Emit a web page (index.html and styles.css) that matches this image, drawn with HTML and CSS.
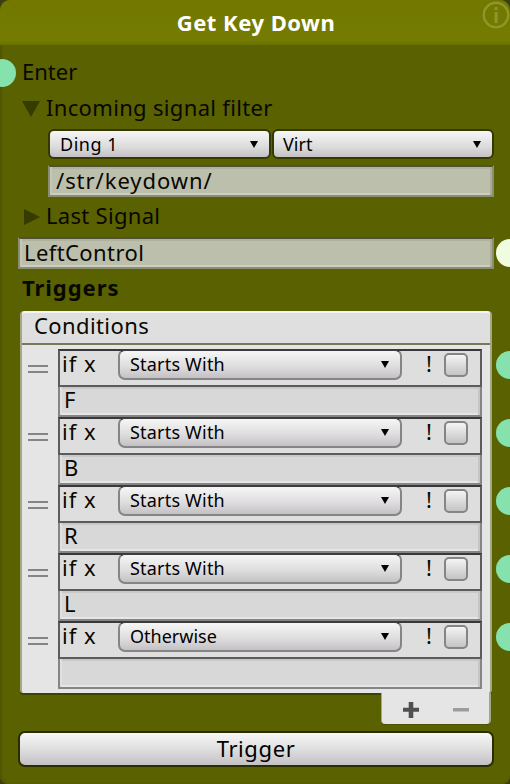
FILE: index.html
```
<!DOCTYPE html>
<html lang="en">
<head>
<meta charset="utf-8">
<title>Get Key Down</title>
<link rel="stylesheet" href="styles.css">
</head>
<body>
<main class="node">
  <header class="head">
    <h1 class="title">Get Key Down</h1>
    <svg class="info" width="28" height="28" viewBox="0 0 28 28"><circle cx="14" cy="14" r="12.2" fill="none" stroke="#8f962c" stroke-width="2.4"/><path d="M12.600 6h3v3h-3zM12.600 11h3v11h-3z" fill="#8f962c"/></svg>
  </header>
  <div class="body">
    <div class="row"><i class="port port-in"></i><span class="t-enter">Enter</span></div>
    <div class="row"><svg class="fold" width="18" height="16" viewBox="0 0 18 16"><path d="M0 0h18L9 16z" fill="#363b00"/></svg><span class="t-filter">Incoming signal filter</span></div>
    <div class="row selects">
      <div class="popup dark first"><span class="t-ding">Ding 1</span><svg class="arrow" width="8" height="7" viewBox="0 0 8 7"><path d="M0 0h8L4 7z"/></svg></div>
      <div class="popup dark"><span class="t-virt">Virt</span><svg class="arrow" width="8" height="7" viewBox="0 0 8 7"><path d="M0 0h8L4 7z"/></svg></div>
    </div>
    <div class="row inset"><div class="field"><span class="t-path">/str/keydown/</span></div></div>
    <div class="row"><svg class="fold" width="18" height="16" viewBox="0 0 18 16"><path d="M2 0l16 8-16 8z" fill="#363b00"/></svg><span class="t-last">Last Signal</span></div>
    <div class="row value"><div class="field"><span class="t-left">LeftControl</span></div><i class="port port-out pale"></i></div>
    <div class="row"><b class="t-trig">Triggers</b></div>

    <section class="list">
      <div class="list-head"><span class="t-cond">Conditions</span></div>
      <div class="items">
        <div class="item"><i class="grip"></i><div class="cell"><div class="test"><span class="t-if">if x</span><div class="popup light"><span class="t-starts">Starts With</span><svg class="arrow" width="8" height="7" viewBox="0 0 8 7"><path d="M0 0h8L4 7z"/></svg></div><span class="not">!</span><i class="check"></i></div><div class="entry">F</div></div><i class="port port-out"></i></div>
        <div class="item"><i class="grip"></i><div class="cell"><div class="test"><span class="t-if">if x</span><div class="popup light"><span class="t-starts">Starts With</span><svg class="arrow" width="8" height="7" viewBox="0 0 8 7"><path d="M0 0h8L4 7z"/></svg></div><span class="not">!</span><i class="check"></i></div><div class="entry">B</div></div><i class="port port-out"></i></div>
        <div class="item"><i class="grip"></i><div class="cell"><div class="test"><span class="t-if">if x</span><div class="popup light"><span class="t-starts">Starts With</span><svg class="arrow" width="8" height="7" viewBox="0 0 8 7"><path d="M0 0h8L4 7z"/></svg></div><span class="not">!</span><i class="check"></i></div><div class="entry">R</div></div><i class="port port-out"></i></div>
        <div class="item"><i class="grip"></i><div class="cell"><div class="test"><span class="t-if">if x</span><div class="popup light"><span class="t-starts">Starts With</span><svg class="arrow" width="8" height="7" viewBox="0 0 8 7"><path d="M0 0h8L4 7z"/></svg></div><span class="not">!</span><i class="check"></i></div><div class="entry">L</div></div><i class="port port-out"></i></div>
        <div class="item"><i class="grip"></i><div class="cell"><div class="test"><span class="t-if">if x</span><div class="popup light"><span class="t-other">Otherwise</span><svg class="arrow" width="8" height="7" viewBox="0 0 8 7"><path d="M0 0h8L4 7z"/></svg></div><span class="not">!</span><i class="check"></i></div><div class="entry"></div></div><i class="port port-out"></i></div>
      </div>
    </section>
    <div class="list-foot">
      <svg width="16" height="16" viewBox="0 0 16 16"><path d="M5.700 0h4.600v5.700H16v4.100h-5.700V16H5.700V9.800H0V5.700h5.700z" fill="#505050"/></svg>
      <svg width="16" height="16" viewBox="0 0 16 16"><path d="M0 6h16v3.500H0z" fill="#9c9c9c"/></svg>
    </div>
    <div class="button"><span class="t-btn">Trigger</span></div>
  </div>
</main>
</body>
</html>
```

FILE: styles.css
```
* { box-sizing: border-box; }
body { margin: 0; background: #3c4010; }
.node {
  position: relative;
  width: 510px;
  height: 784px;
  overflow: hidden;
  border-radius: 10px 10px 8px 8px;
  background: #5a6100;
  box-shadow: inset 2px 0 2px #505600;
  font: 22px/36px "Noto Sans", "Open Sans", sans-serif;
  color: #080800;
  white-space: nowrap;
}
.head {
  position: relative;
  height: 45px;
  background: linear-gradient(#727800, #747c00 90%, #687000);
  display: flex;
  justify-content: center;
}
.title { margin: 0; padding-left: 2px; font-size: 22px; font-weight: 700; line-height: 45px; color: #fff; letter-spacing: .5px; }
.info { position: absolute; right: 0; top: 1px; }
.body { padding: 9px 16px 0 18px; }
.row { position: relative; height: 36px; display: flex; align-items: center; padding-left: 4px; }
.row > span, .row > b { padding-bottom: 2px; }
.row > .fold { margin: 2px 6px 0 0; }
.t-filter { letter-spacing: .33px; }
.t-last { letter-spacing: .3px; }
.t-path { letter-spacing: .95px; margin-left: 2px; }
.t-left { letter-spacing: .4px; }
.t-trig { letter-spacing: .95px; }
.t-cond { letter-spacing: .4px; }
.t-ding { letter-spacing: .5px; }
.t-starts { letter-spacing: .2px; }
.t-btn { letter-spacing: .6px; }
.selects { padding: 3px 0 3px 30px; gap: 1px; }
.inset { padding: 3px 0 1px 30px; }
.value { padding: 3px 0 1px; }
.popup { display: flex; align-items: center; justify-content: space-between; font-size: 18px; background: linear-gradient(#f6f6f6, #dddcdd 60%, #c3c1c3); color: #000; }
.popup.dark { width: 222px; height: 30px; border: 2px solid #353900; border-radius: 6px; padding: 0 11px 0 10px; }
.popup.dark.first { width: 223px; }
.popup.dark:not(.first) { padding-left: 9px; }
.popup.light { width: 284px; height: 31px; border: 2px solid #858585; border-top-color: #3c3c3c; border-radius: 7px; padding: 0 11px 1px 10px; }
.popup.light .arrow { margin-top: 1px; }
.field {
  flex: 1;
  height: 32px;
  line-height: 26px;
  padding-left: 4px;
  border: 2px solid #8c8e72;
  border-top-color: #4f5135;
  background: #bdbfad;
  box-shadow: inset 2px 0 #c5c7b7, inset -2px 0 #aaac98, inset 0 2px #b0b2a0, inset 0 -2px #cccebe;
}
.port { position: absolute; width: 28px; height: 28px; border-radius: 50%; background: #85e2ac; }
.port-in { left: -30px; top: 5px; }
.port-out { left: 478px; }
.port-out.pale { left: 478px; top: 5px; background: #f0fce0; }
.list {
  margin-top: 5px;
  margin-left: 2px;
  width: 472px;
  height: 382px;
  background: #e5e5e5;
  border: solid #a5a787;
  border-width: 0 2px;
  border-radius: 4px 4px 3px 3px;
  box-shadow: 0 2px #3e4202;
}
.list-head { height: 34px; background: #dfdfdf; border-top: 2px solid #f4f4f0; border-bottom: 2px solid #767a58; border-radius: 4px 4px 0 0; line-height: 24px; padding-left: 12px; }
.items { padding-top: 4px; }
.item { position: relative; height: 68px; display: flex; }
.item .port-out { left: 474px; top: 2px; }
.grip { width: 20px; height: 8px; margin: 16px 10px 0 6px; border: solid #858585; border-width: 2px 0; }
.cell { width: 424px; }
.test { display: flex; height: 38px; border: 2px solid #5c5c5c; border-top-color: #383838; background: #dedede; }
.test .popup { margin-top: -2px; }
.t-if { width: 58px; padding-left: 2px; line-height: 25px; letter-spacing: 1px; }
.not { width: 42px; padding-left: 24px; line-height: 25px; }
.check { width: 24px; height: 24px; margin-top: 2px; border: 2px solid #858585; border-radius: 5px; background: linear-gradient(#f4f4f4, #dddcdd 50%, #c5c3c5); }
.entry { height: 30px; padding-left: 4px; line-height: 24px; border: solid #858587; border-width: 0 2px 2px; background: #d8d8d8; box-shadow: inset 2px 0 #e0e0e0, inset -2px 0 #c6c6c6, inset 0 2px #c8c8c8, inset 0 -2px #e6e6e6; }
.list-foot { position: relative; width: 110px; height: 31px; margin-left: 363px; display: flex; align-items: center; gap: 34px; padding: 2px 0 0 21px; background: #e5e5e5; border: solid #a5a787; border-width: 0 2px 0 1px; border-radius: 0 0 4px 4px; box-shadow: 0 1px #4c5103; }
.button { margin-top: 7px; height: 36px; border: 2px solid #2a2d02; border-radius: 7px; background: linear-gradient(#f8f8f8, #dddcdd 55%, #c3c1c3); text-align: center; line-height: 30px; color: #000; }
```
